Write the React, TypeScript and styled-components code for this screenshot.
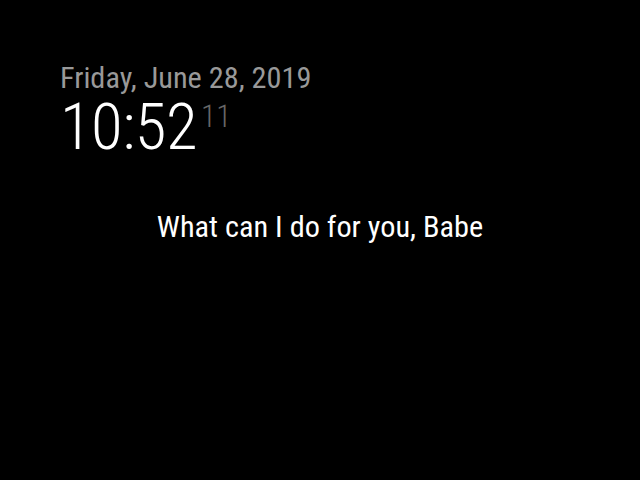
import React from "react";
import styled, { createGlobalStyle } from "styled-components";

const Global = createGlobalStyle`
  html, body { margin: 0; padding: 0; background: #000; }
  body {
    width: 640px; height: 480px; overflow: hidden;
    font-family: "Roboto Condensed", Roboto, "Liberation Sans", sans-serif;
    font-stretch: condensed;
    color: #aaa;
  }
`;

const Screen = styled.div`
  box-sizing: border-box;
  width: 640px;
  height: 480px;
  padding: 60px;
  display: flex;
  flex-direction: column;
`;

const Clock = styled.div`
  display: flex;
  flex-direction: column;
  align-items: flex-start;
`;

const DateLine = styled.div`
  font-size: 30.3px;
  line-height: 35px;
  color: #999;
  font-weight: 400;
`;

const TimeLine = styled.div`
  font-size: 65px;
  line-height: 65px;
  font-weight: 300;
  color: #fff;
  letter-spacing: -0.5px;
  display: flex;
  align-items: flex-start;
`;

const Seconds = styled.span`
  display: inline-block;
  font-size: 31px;
  color: #666;
  line-height: 31px;
  padding-top: 6px;
  margin-left: 4px;
  letter-spacing: 0;
`;

const Middle = styled.div`
  flex: 1;
  display: flex;
  justify-content: center;
  padding-top: 49px;
`;

const Compliment = styled.div`
  font-size: 30.3px;
  line-height: 35px;
  color: #fff;
`;

export default function App() {
  return (
    <>
      <Global />
      <Screen>
        <Clock>
          <DateLine>Friday, June 28, 2019</DateLine>
          <TimeLine>
            <span>10:52</span>
            <Seconds>11</Seconds>
          </TimeLine>
        </Clock>
        <Middle>
          <Compliment>What can I do for you, Babe</Compliment>
        </Middle>
      </Screen>
    </>
  );
}
